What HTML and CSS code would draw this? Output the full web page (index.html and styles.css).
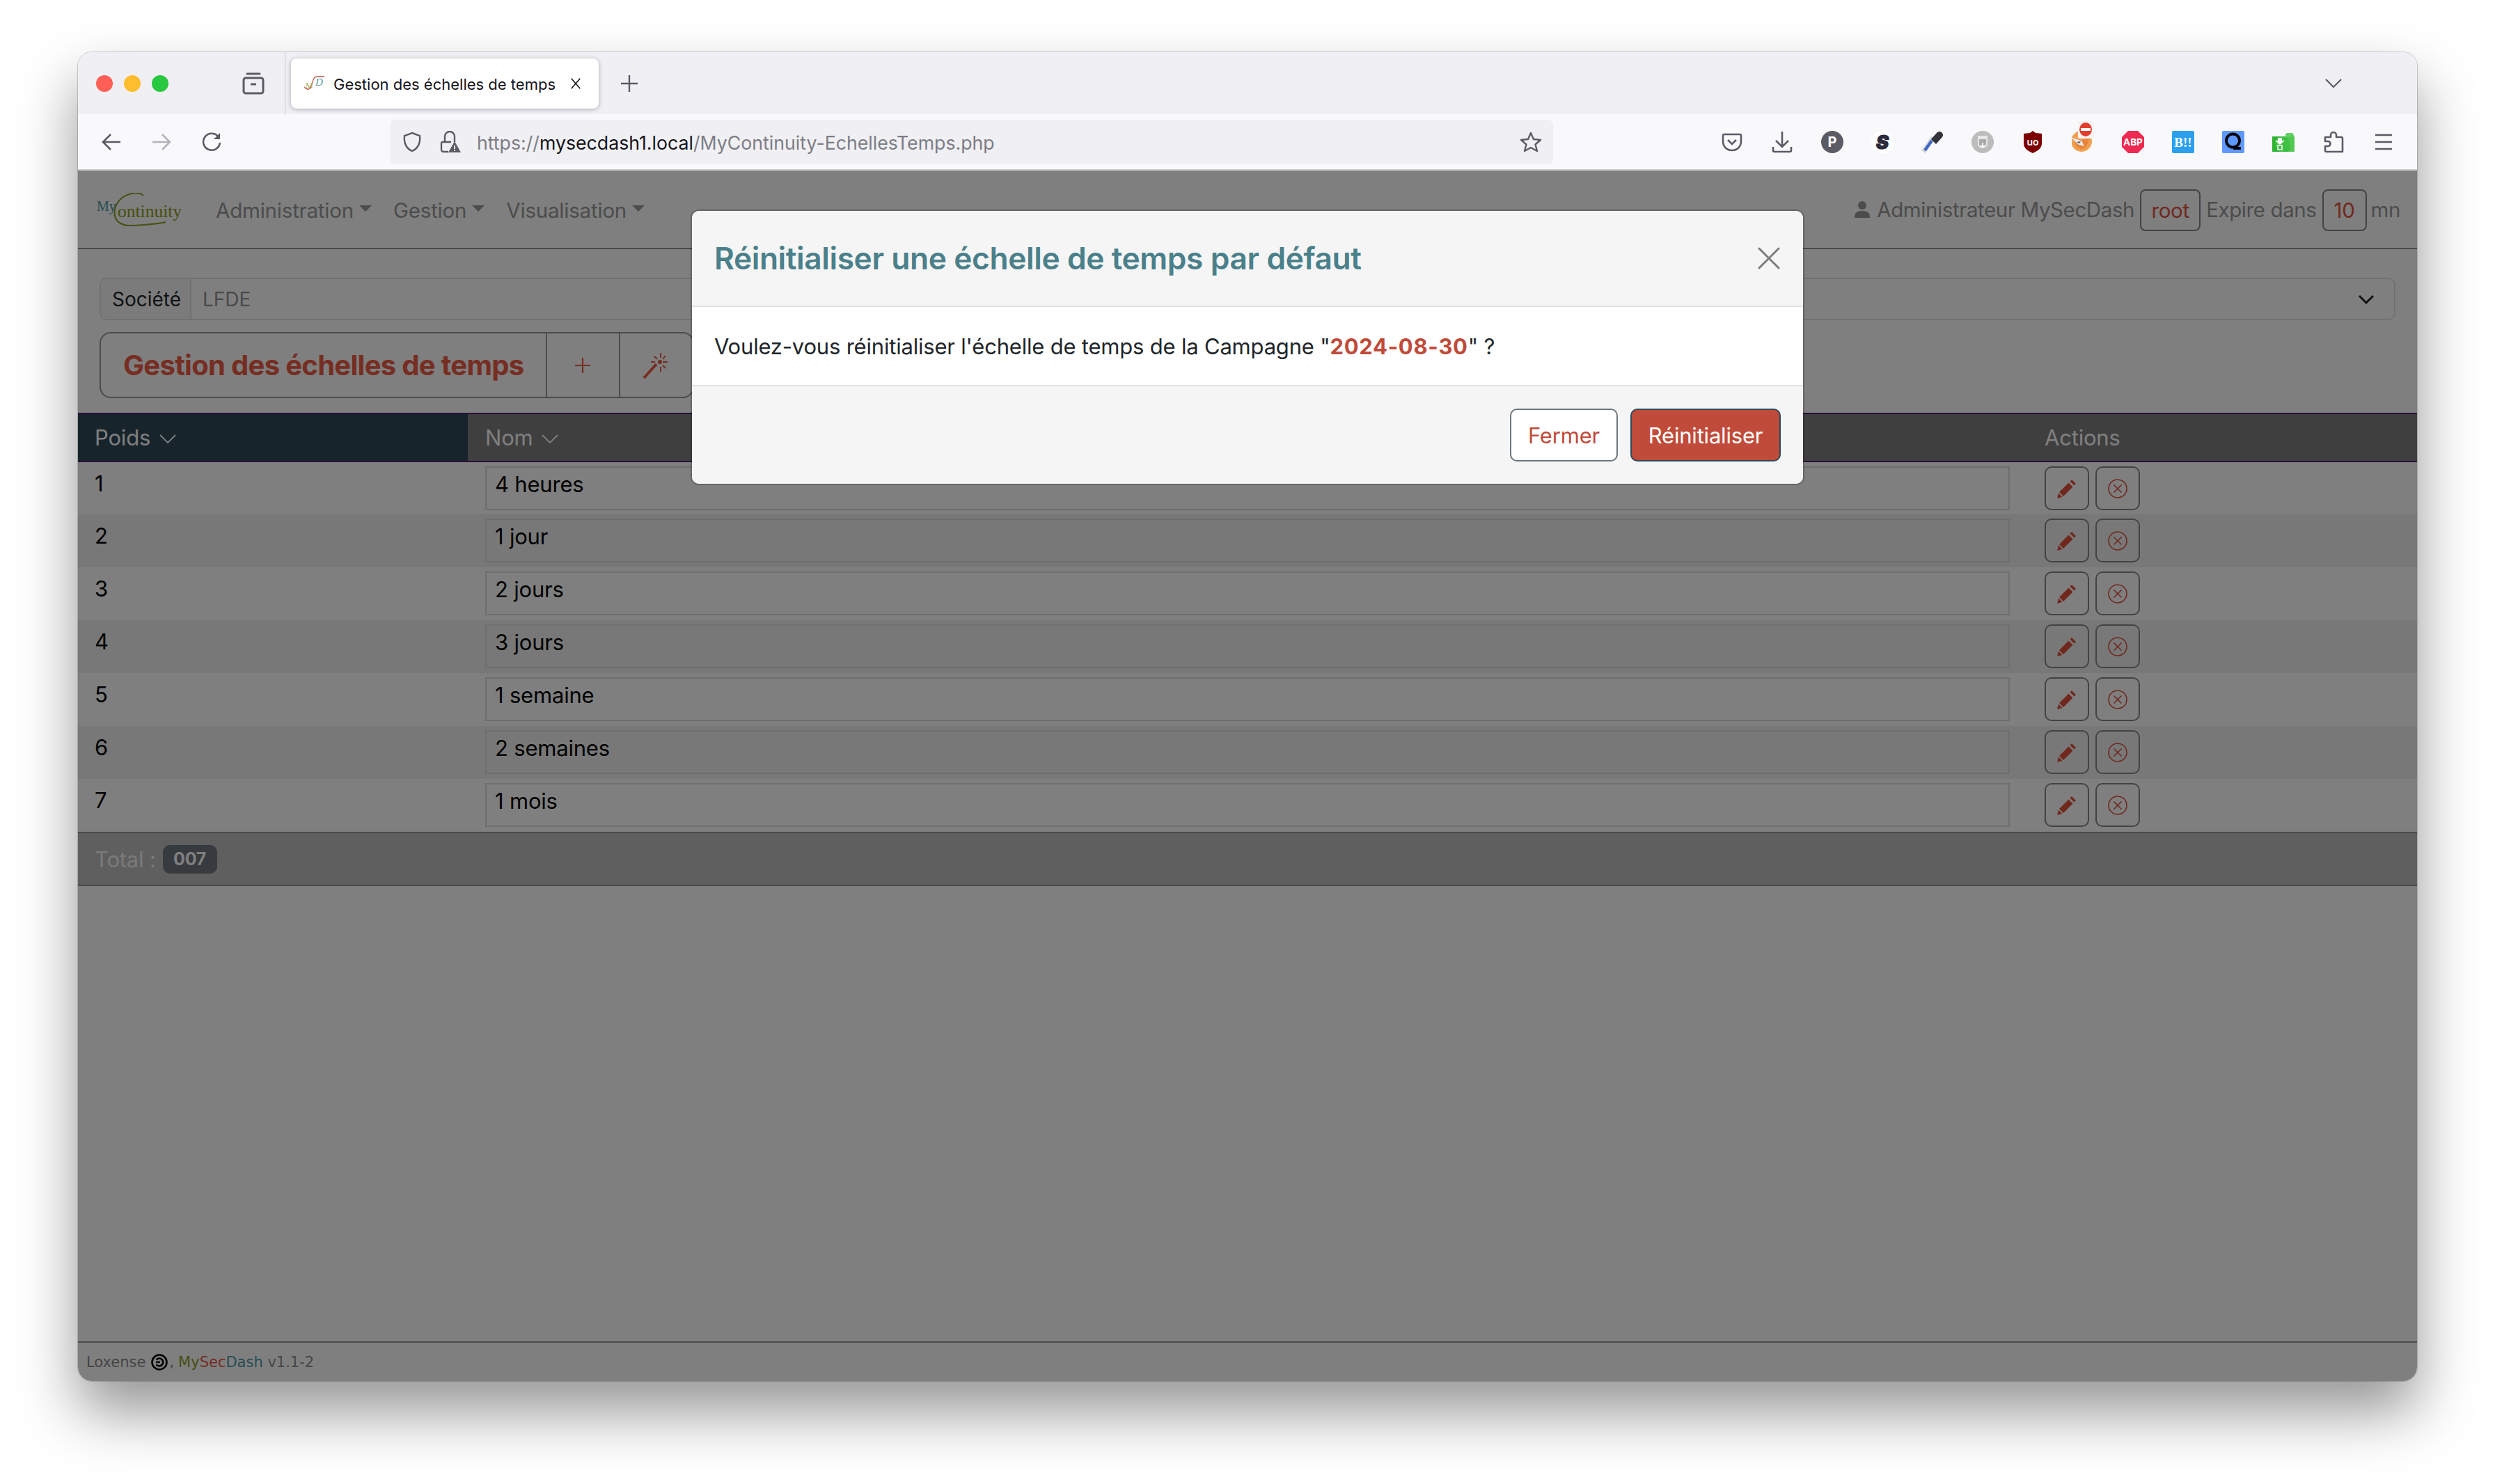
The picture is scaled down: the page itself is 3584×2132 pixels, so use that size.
FILE: index.html
```html
<!DOCTYPE html>
<html lang="fr">
<head>
  <meta charset="UTF-8" />
  <title>Gestion des échelles de temps</title>
  <link rel="stylesheet" href="styles.css">
</head>
<body>
  <div class="window">

    <div class="tabbar">
      <div class="lights">
        <span class="light red"></span>
        <span class="light amber"></span>
        <span class="light green"></span>
      </div>
      <svg class="view-icon" viewBox="0 0 32 32" fill="none" stroke="#5b5b66" stroke-width="3">
        <path d="M7 2h18" stroke-linecap="round"/>
        <rect x="2" y="8" width="28" height="22" rx="3"/>
        <path d="M12 17h8"/>
      </svg>
      <span class="tab-sep"></span>
      <div class="tab">
        <svg class="favicon" viewBox="0 0 32 24" fill="none">
          <path d="M1 17c5 6 9 3 11-4s3-11 8-11h10" stroke="#c0564a" stroke-width="1.3"/>
          <text x="3" y="19" font-size="12" font-family="Liberation Serif" fill="#a9ad5c">M</text>
          <text x="17" y="15" font-size="15" font-style="italic" font-family="Liberation Serif" fill="#5a97a2">D</text>
        </svg>
        <span class="tab-title">Gestion des échelles de temps</span>
        <svg class="tab-close" viewBox="0 0 20 20" stroke="#15141a" stroke-width="1.8"><path d="M3 2l14 16M17 2L3 18"/></svg>
      </div>
      <svg class="new-tab" viewBox="0 0 24 24" stroke="#5b5b66" stroke-width="2.4"><path d="M12 0v24M0 12h24"/></svg>
      <svg class="tabs-menu" viewBox="0 0 24 14" fill="none" stroke="#5b5b66" stroke-width="2.2"><path d="M1 1l11 11L23 1"/></svg>
    </div>

    <div class="toolbar">
      <div class="nav-buttons">
        <span class="tool"><svg class="icon-28" viewBox="0 0 28 28" fill="none" stroke="#5b5b66" stroke-width="2.6"><path d="M27 14H3M13 3L2 14l11 11"/></svg></span>
        <span class="tool"><svg class="icon-28" viewBox="0 0 28 28" fill="none" stroke="#b4b4b9" stroke-width="2.6"><path d="M1 14h24M15 3l11 11-11 11"/></svg></span>
        <span class="tool"><svg class="icon-28" viewBox="0 0 28 28" fill="none" stroke="#5b5b66" stroke-width="2.6"><path d="M24 7A12 12 0 1 0 26 15"/><path d="M26 1v9h-9" fill="#5b5b66" stroke="none"/></svg></span>
      </div>
      <div class="urlbar">
        <svg class="shield" viewBox="0 0 28 30" fill="none" stroke="#5b5b66" stroke-width="2.4"><path d="M14 2l11 4c1 10-2 18-11 22C5 24 2 16 3 6z"/></svg>
        <svg class="lock" viewBox="0 0 30 32" fill="none">
          <path d="M7 16V8a7 7 0 0 1 14 0v8" stroke="#5b5b66" stroke-width="2.4"/>
          <path d="M12 30H5a3 3 0 0 1-3-3V18a2 2 0 0 1 2-2h12" stroke="#5b5b66" stroke-width="2.4"/>
          <path d="M21 15l9 16H12z" fill="#5b5b66"/>
          <path d="M21 21v5M21 27v2" stroke="#f0f0f4" stroke-width="2"/>
        </svg>
        <span class="url"><span class="url-dim">https://</span>mysecdash1.local<span class="url-dim">/MyContinuity-EchellesTemps.php</span></span>
        <svg class="star" viewBox="0 0 32 32" fill="none" stroke="#5b5b66" stroke-width="2.4" stroke-linejoin="round"><path d="M16 3l4 9 10 1-7.500 6.500L25 29l-9-5-9 5 2.500-9.500L2 13l10-1z"/></svg>
      </div>
      <div class="addons">
        <span class="tool"><svg class="icon-32" viewBox="0 0 32 32" fill="none" stroke="#5b5b66" stroke-width="2.600"><path d="M5 5h22a2 2 0 0 1 2 2v8c0 8-6 13-13 13S3 23 3 15V7a2 2 0 0 1 2-2z"/><path d="M10 13l6 6 6-6"/></svg></span>
        <span class="tool"><svg class="icon-32" viewBox="0 0 32 32" fill="none" stroke="#5b5b66" stroke-width="2.600"><path d="M16 1v21M7 14l9 9 9-9M3 23v5a2 2 0 0 0 2 2h22a2 2 0 0 0 2-2v-5"/></svg></span>
        <span class="tool"><svg class="icon-32" viewBox="0 0 32 32"><circle cx="16" cy="16" r="16" fill="#5b5b66"/><text x="16" y="23" text-anchor="middle" font-size="20" font-weight="700" font-family="Inter" fill="#fff">P</text></svg></span>
        <span class="tool"><svg class="icon-32" viewBox="0 0 32 32"><circle cx="16" cy="16" r="16" fill="#fff"/><text x="16" y="26" text-anchor="middle" font-size="27" font-weight="900" font-style="italic" font-family="Inter" fill="#2b2a3a" stroke="#2b2a3a" stroke-width="1.2">S</text></svg></span>
        <span class="tool"><svg class="icon-32" viewBox="0 0 32 32" fill="none"><path d="M3 30L17 10" stroke="#d2d4dc" stroke-width="7"/><path d="M5 28l10-14" stroke="#3e67c4" stroke-width="4"/><path d="M14 12l8-9a5 5 0 0 1 8 6l-9 10z" fill="#33333b"/></svg></span>
        <span class="tool"><svg class="icon-32" viewBox="0 0 32 32"><circle cx="16" cy="16" r="16" fill="#bcbcbc"/><path d="M9 7h14v14l-3 3h-8l-3-3z" fill="#e6e6e6"/><path d="M11 12h10v9h-10z" fill="#a9a9a9"/><path d="M16 17v6M13 21l3 3 3-3" stroke="#fff" stroke-width="1.600" fill="none"/></svg></span>
        <span class="tool"><svg class="icon-32" viewBox="0 0 32 32"><path d="M16 0l4 3 9 1v14c0 7-6 11-13 14C9 29 3 25 3 18V4l9-1z" fill="#7c0000"/><text x="16" y="21" text-anchor="middle" font-size="14" font-weight="600" font-family="Inter" fill="#fff">uo</text></svg></span>
        <span class="tool"><svg class="icon-32 addon-fox" viewBox="0 0 32 46"><circle cx="14" cy="29" r="15" fill="#f0a050"/><path d="M2 24l12 3 12-3-5 13-7 4-7-4z" fill="#e8873c"/><path d="M-2 23l16 5 4 8-8-2z" fill="#e8e8e8"/><path d="M7 30l6-1-2 3z" fill="#555"/><rect x="9" y="0" width="23" height="25" rx="2" fill="#f3f3f3"/><ellipse cx="20" cy="12" rx="9" ry="10" fill="#e23d2e"/><rect x="13" y="10" width="14" height="4" fill="#fff"/></svg></span>
        <span class="tool"><svg class="icon-32" viewBox="0 0 32 32"><path d="M9 0h14l9 9v14l-9 9H9l-9-9V9z" fill="#ee2a52"/><text x="16" y="21" text-anchor="middle" font-size="13.500" font-weight="700" font-family="Inter" fill="#fff">ABP</text></svg></span>
        <span class="tool"><svg class="icon-32" viewBox="0 0 32 32"><rect width="32" height="32" rx="2" fill="#2ca0ee"/><text x="16" y="23" text-anchor="middle" font-size="19" font-weight="700" font-family="Liberation Serif" fill="#fff">B!!</text></svg></span>
        <span class="tool"><svg class="icon-32" viewBox="0 0 32 32"><rect width="32" height="32" rx="2" fill="#5f99ff"/><circle cx="15.500" cy="14" r="9.500" fill="none" stroke="#06080f" stroke-width="4"/><path d="M16 25h11" stroke="#06080f" stroke-width="4"/></svg></span>
        <span class="tool"><svg class="icon-32" viewBox="0 0 32 32"><path d="M19 5l2-2h8l2 3v4H19z" fill="#62d263"/><path d="M0 8h32v22H0z" fill="#2fb533"/><circle cx="15" cy="19" r="11" fill="#3fc043"/><path d="M18 8h14v22H22a14 14 0 0 0-4-22z" fill="#52c754"/><path d="M8 10h6v4h4l-7 6-7-6h4z" fill="#fff"/><rect x="8" y="21" width="6" height="6" fill="none" stroke="#fff" stroke-width="1.500"/></svg></span>
        <span class="tool"><svg class="icon-32" viewBox="0 0 32 32" fill="none" stroke="#5b5b66" stroke-width="2.600" stroke-linejoin="round"><path d="M12 9V6a4 4 0 0 1 8 0v3h7a2 2 0 0 1 2 2v19H6a2 2 0 0 1-2-2v-6h4a3.500 3.500 0 0 0 0-7H4v-6z"/></svg></span>
        <span class="tool"><svg class="icon-32" viewBox="0 0 32 32" stroke="#5b5b66" stroke-width="2.600"><path d="M4 6h24M4 16h24M4 26h24"/></svg></span>
      </div>
    </div>

    <div class="page">
      <nav class="navbar">
        <div class="brand">
          <span class="brand-my">My</span>
          <svg class="brand-swoosh" viewBox="0 0 122 48" fill="none" stroke="#8a9e20" stroke-width="2"><path d="M67 4C60 -2 48 0 38 6C28 13 24 24 26 33C28 44 40 48 52 47C68 46 88 45 99 42"/></svg>
          <span class="brand-name">ontinuity</span>
        </div>
        <a class="menu">Administration</a>
        <a class="menu">Gestion</a>
        <a class="menu">Visualisation</a>
        <div class="session">
          <svg class="user-icon" viewBox="0 0 22 24" fill="#989898"><circle cx="11" cy="6" r="6"/><path d="M0 24c0-8 4-10 11-10s11 2 11 10z"/></svg>
          <span>Administrateur MySecDash</span>
          <span class="chip chip-root">root</span>
          <span>Expire dans</span>
          <span class="chip chip-time">10</span>
          <span class="unit">mn</span>
        </div>
      </nav>

      <div class="company">
        <span class="company-label">Société</span>
        <span class="company-value">LFDE</span>
        <svg class="company-arrow" viewBox="0 0 22 14" fill="none" stroke="#212529" stroke-width="3"><path d="M1 2l10 10L21 2"/></svg>
      </div>

      <div class="title-group">
        <h1 class="title-cell">Gestion des échelles de temps</h1>
        <span class="title-btn plus-btn"><svg viewBox="0 0 22 22" stroke="#ec5a44" stroke-width="2.200"><path d="M11 0v22M0 11h22"/></svg></span>
        <span class="title-btn wand-btn"><svg viewBox="0 0 40 40" fill="none" stroke="#ec5a44" stroke-width="2"><path d="M2 38l18-20" stroke-width="4"/><path d="M26 2v7M26 22v7M36 15h-7M12 15h6M33 6l-4 5M33 24l-4-4M17 7l4 4"/><circle cx="25" cy="15" r="2" fill="#ec5a44"/></svg></span>
      </div>

      <table class="scales">
        <thead>
          <tr>
            <th class="sorted">Poids <svg class="sort-icon" viewBox="0 0 24 14" fill="none" stroke="#fff" stroke-width="1.800"><path d="M1 1l11 11L23 1"/></svg></th>
            <th>Nom <svg class="sort-icon" viewBox="0 0 24 14" fill="none" stroke="#fff" stroke-width="1.800"><path d="M1 1l11 11L23 1"/></svg></th>
            <th>Actions</th>
          </tr>
        </thead>
        <tbody>
          <tr><td>1</td><td><div class="name-box">4 heures</div></td><td><div class="row-actions"><span class="icon-btn"><svg class="pencil" viewBox="0 0 28 28"><use href="#pencil"/></svg></span><span class="icon-btn"><svg class="cancel" viewBox="0 0 28 28"><use href="#cancel"/></svg></span></div></td></tr>
          <tr><td>2</td><td><div class="name-box">1 jour</div></td><td><div class="row-actions"><span class="icon-btn"><svg class="pencil" viewBox="0 0 28 28"><use href="#pencil"/></svg></span><span class="icon-btn"><svg class="cancel" viewBox="0 0 28 28"><use href="#cancel"/></svg></span></div></td></tr>
          <tr><td>3</td><td><div class="name-box">2 jours</div></td><td><div class="row-actions"><span class="icon-btn"><svg class="pencil" viewBox="0 0 28 28"><use href="#pencil"/></svg></span><span class="icon-btn"><svg class="cancel" viewBox="0 0 28 28"><use href="#cancel"/></svg></span></div></td></tr>
          <tr><td>4</td><td><div class="name-box">3 jours</div></td><td><div class="row-actions"><span class="icon-btn"><svg class="pencil" viewBox="0 0 28 28"><use href="#pencil"/></svg></span><span class="icon-btn"><svg class="cancel" viewBox="0 0 28 28"><use href="#cancel"/></svg></span></div></td></tr>
          <tr><td>5</td><td><div class="name-box">1 semaine</div></td><td><div class="row-actions"><span class="icon-btn"><svg class="pencil" viewBox="0 0 28 28"><use href="#pencil"/></svg></span><span class="icon-btn"><svg class="cancel" viewBox="0 0 28 28"><use href="#cancel"/></svg></span></div></td></tr>
          <tr><td>6</td><td><div class="name-box">2 semaines</div></td><td><div class="row-actions"><span class="icon-btn"><svg class="pencil" viewBox="0 0 28 28"><use href="#pencil"/></svg></span><span class="icon-btn"><svg class="cancel" viewBox="0 0 28 28"><use href="#cancel"/></svg></span></div></td></tr>
          <tr><td>7</td><td><div class="name-box">1 mois</div></td><td><div class="row-actions"><span class="icon-btn"><svg class="pencil" viewBox="0 0 28 28"><use href="#pencil"/></svg></span><span class="icon-btn"><svg class="cancel" viewBox="0 0 28 28"><use href="#cancel"/></svg></span></div></td></tr>
        </tbody>
      </table>

      <div class="total">
        <span>Total :</span>
        <span class="badge">007</span>
      </div>

      <footer class="footer">
        <span>Loxense</span>
        <svg class="copyleft" viewBox="0 0 24 24" fill="none" stroke="#000" stroke-width="2.600"><circle cx="12" cy="12" r="10.500"/><path d="M7.500 8.500a5.500 5.500 0 1 1 0 7M7 12h6"/></svg><span class="comma">,</span>
        <span><span class="my">My</span><span class="sec">Sec</span><span class="dash">Dash</span> v1.1-2</span>
      </footer>

      <div class="backdrop">
        <div class="modal">
          <div class="modal-header">
            <h2>Réinitialiser une échelle de temps par défaut</h2>
            <svg class="modal-close" viewBox="0 0 32 32" stroke="#7c7c7c" stroke-width="3" stroke-linecap="round"><path d="M2 2l28 28M30 2L2 30"/></svg>
          </div>
          <div class="modal-body">Voulez-vous réinitialiser l'échelle de temps de la Campagne "<strong>2024-08-30</strong>" ?</div>
          <div class="modal-footer">
            <button class="btn btn-close">Fermer</button>
            <button class="btn btn-reset">Réinitialiser</button>
          </div>
        </div>
      </div>
    </div>
  </div>

  <svg class="defs" width="0" height="0">
    <symbol id="pencil" viewBox="0 0 28 28"><path d="M21 1l6 6-2.500 2.500-6-6zM16.500 5.500l6 6L9 25l-6-6zM2 20.500L7.500 26 0 28z" fill="#e0503d"/></symbol>
    <symbol id="cancel" viewBox="0 0 28 28"><circle cx="14" cy="14" r="13" fill="none" stroke="#e0503d" stroke-width="1.600"/><path d="M8.500 8.500l11 11M19.500 8.500l-11 11" stroke="#e0503d" stroke-width="1.600"/></symbol>
  </svg>
</body>
</html>
```

FILE: styles.css
```css
*, *::before, *::after {
  box-sizing: border-box;
}

html, body {
  height: 100%;
}

body {
  margin: 0;
  padding: 75px 112px 148px;
  background: #fff;
  font-family: 'Inter', sans-serif;
  font-size: 28px;
  color: #212529;
}

svg {
  display: block;
  flex: none;
}

.defs {
  position: absolute;
}

.window {
  height: 100%;
  display: flex;
  flex-direction: column;
  position: relative;
  border-radius: 20px;
  overflow: hidden;
  box-shadow: 0 0 0 1px rgba(0, 0, 0, 0.18), 0 44px 84px rgba(0, 0, 0, 0.42);
}

/* browser chrome */
.tabbar {
  height: 89px;
  display: flex;
  align-items: center;
  background: #f0f0f4;
  padding-left: 26px;
}

.lights {
  display: flex;
  gap: 16px;
}

.light {
  width: 24px;
  height: 24px;
  border-radius: 50%;
}

.red { background: #ff5f57; }
.amber { background: #febc2e; }
.green { background: #28c840; }

.view-icon {
  width: 32px;
  height: 32px;
  margin-left: 106px;
}

.tab-sep {
  width: 1px;
  height: 100%;
  background: #c8c8cc;
  margin-left: 29px;
}

.tab {
  width: 442px;
  height: 72px;
  margin-left: 8px;
  background: #fff;
  border-radius: 8px;
  box-shadow: 0 1px 6px rgba(0, 0, 0, 0.3);
  display: flex;
  align-items: center;
  padding-left: 18px;
  font-size: 22px;
  color: #15141a;
}

.favicon {
  width: 32px;
  height: 24px;
}

.tab-title {
  margin-left: 11px;
  padding-top: 2px;
  white-space: nowrap;
}

.tab-close {
  width: 18px;
  height: 20px;
  margin-left: auto;
  margin-right: 24px;
}

.new-tab {
  width: 24px;
  height: 24px;
  margin-left: 32px;
}

.tabs-menu {
  width: 24px;
  height: 14px;
  margin-left: auto;
  margin-right: 108px;
}

.toolbar {
  height: 81px;
  display: flex;
  align-items: center;
  background: #f9f9fb;
  padding: 0 12px;
  border-bottom: 2px solid #cfcfd2;
}

.nav-buttons {
  display: flex;
}

.tool {
  width: 72px;
  display: flex;
  justify-content: center;
}

.icon-28 {
  width: 28px;
  height: 28px;
}

.icon-32 {
  width: 32px;
  height: 32px;
}

.addon-fox {
  height: 46px;
  margin-top: -14px;
}

.urlbar {
  width: 1671px;
  height: 64px;
  margin-left: 220px;
  background: #f0f0f4;
  border-radius: 8px;
  display: flex;
  align-items: center;
  padding-left: 18px;
  font-size: 26.7px;
  color: #15141a;
}

.shield {
  width: 28px;
  height: 30px;
}

.lock {
  width: 30px;
  height: 32px;
  margin-left: 26px;
}

.url {
  margin-left: 23px;
  padding-top: 2px;
  white-space: nowrap;
}

.url-dim {
  color: #7d7d85;
}

.star {
  width: 32px;
  height: 32px;
  margin-left: auto;
  margin-right: 16px;
}

.addons {
  display: flex;
  margin-left: auto;
}

/* application page */
.page {
  flex: 1;
  min-height: 0;
  position: relative;
  display: flex;
  flex-direction: column;
  background: #fff;
  font-size: 31px;
  letter-spacing: -0.2px;
}

.navbar {
  height: 113px;
  display: flex;
  align-items: center;
  padding: 0 24px 0 27px;
  border-bottom: 2px solid #949494;
  color: #989898;
  font-size: 29.5px;
  flex: none;
}

.brand {
  width: 122px;
  height: 48px;
  position: relative;
  margin-right: 49px;
  font-family: 'Liberation Serif', serif;
  letter-spacing: 0;
}

.brand-my {
  position: absolute;
  left: 0;
  top: 8px;
  font-size: 20px;
  color: #4c9aa4;
}

.brand-swoosh {
  position: absolute;
  left: 0;
  top: 0;
  width: 122px;
  height: 48px;
}

.brand-name {
  position: absolute;
  left: 30px;
  top: 12px;
  font-size: 25.5px;
  color: #8a9e20;
}

.menu {
  display: flex;
  align-items: center;
  margin-top: 3px;
  margin-right: 31px;
}

.menu::after {
  content: "";
  margin-left: 8px;
  margin-top: -6px;
  border-top: 9px solid #989898;
  border-left: 9px solid transparent;
  border-right: 9px solid transparent;
}

.session {
  margin-left: auto;
  display: flex;
  align-items: center;
  gap: 8px;
  letter-spacing: -0.4px;
}

.user-icon {
  width: 22px;
  height: 24px;
  margin-right: 2px;
}

.chip {
  height: 60px;
  border: 2px solid #808890;
  border-radius: 8px;
  color: #e0503d;
  display: flex;
  align-items: center;
  justify-content: center;
  margin-top: 2px;
}

.chip-root {
  width: 87px;
}

.chip-time {
  width: 64px;
}

.unit {
  margin-left: -2px;
}

.company {
  flex: none;
  height: 61px;
  margin: 41px 31px 0;
  display: flex;
  align-items: center;
  border: 2px solid #dee2e6;
  border-radius: 10px;
  font-size: 28px;
  letter-spacing: 0;
}

.company-label {
  height: 100%;
  width: 130px;
  padding-left: 16px;
  display: flex;
  align-items: center;
  border-right: 2px solid #dee2e6;
  background: #f6f6f6;
  border-radius: 10px 0 0 10px;
}

.company-value {
  margin-left: 16px;
  color: #949494;
}

.company-arrow {
  width: 22px;
  height: 14px;
  margin-left: auto;
  margin-right: 29px;
}

.title-group {
  flex: none;
  width: 854px;
  height: 95px;
  margin: 17px 31px 0;
  display: flex;
  border: 2px solid #8e98a0;
  border-radius: 16px;
}

.title-cell {
  width: 640px;
  margin: 0;
  padding-left: 32px;
  display: flex;
  align-items: center;
  font-size: 40px;
  font-weight: 700;
  letter-spacing: -0.7px;
  color: #ec5a44;
  white-space: nowrap;
}

.title-btn {
  width: 106px;
  display: flex;
  align-items: center;
  justify-content: center;
  border-left: 2px solid #8e98a0;
}

.plus-btn svg {
  width: 22px;
  height: 22px;
}

.wand-btn svg {
  width: 40px;
  height: 40px;
}

.scales {
  flex: none;
  width: 100%;
  margin-top: 21px;
  table-layout: fixed;
  border-collapse: collapse;
  border-top: 2px solid #949494;
}

.scales th {
  height: 69px;
  padding: 0 25px;
  background: #7e7e7e;
  color: #fff;
  font-weight: 400;
  text-align: left;
  border-top: 2px solid #541e74;
  border-bottom: 2px solid #541e74;
}

.scales th:nth-child(1) {
  width: 560px;
  padding-left: 24px;
}

.scales th:nth-child(3) {
  width: 560px;
}

.scales th.sorted {
  background: #2e4858;
}

.sort-icon {
  display: inline-block;
  width: 24px;
  height: 14px;
  margin-left: 4px;
  vertical-align: 2px;
}

.scales td {
  height: 76px;
  padding: 6px 25px 0;
  vertical-align: top;
}

.scales td:first-child {
  padding: 12px 24px 0;
  color: #000;
}

.scales tbody tr:nth-child(even) {
  background: #f0f0f0;
}

.name-box {
  height: 63px;
  padding: 5px 12px;
  border: 2px solid #dcdcdc;
  color: #000;
}

.row-actions {
  display: flex;
  gap: 9px;
}

.icon-btn {
  width: 64px;
  height: 63px;
  border: 2px solid #808890;
  border-radius: 10px;
  display: flex;
  align-items: center;
  justify-content: center;
}

.pencil, .cancel {
  width: 28px;
  height: 28px;
}

.total {
  flex: none;
  height: 78px;
  display: flex;
  align-items: center;
  gap: 10px;
  padding: 0 24px;
  background: #bebebe;
  border-top: 2px solid #949494;
  border-bottom: 2px solid #949494;
  color: #f4f4f4;
}

.badge {
  width: 78px;
  height: 41px;
  border-radius: 10px;
  background: #6e747c;
  color: #fff;
  font-size: 25px;
  font-weight: 700;
  display: flex;
  align-items: center;
  justify-content: center;
}

.footer {
  flex: none;
  height: 57px;
  margin-top: auto;
  padding: 0 12px;
  display: flex;
  align-items: center;
  gap: 5px;
  border-top: 2px solid #949494;
  font-family: 'DejaVu Sans', sans-serif;
  font-size: 21px;
  letter-spacing: 0;
  color: #8c8c8c;
}

.copyleft {
  width: 24px;
  height: 24px;
  margin-left: 3px;
}

.comma {
  margin-left: -3px;
  margin-right: 1px;
}

.my { color: #8a9e20; }
.sec { color: #ec5a44; }
.dash { color: #4c9aa4; }

.backdrop {
  position: absolute;
  inset: 0;
  background: rgba(0, 0, 0, 0.5);
  display: flex;
  justify-content: center;
  align-items: flex-start;
  padding-top: 56px;
}

.modal {
  width: 1600px;
  height: 396px;
  display: flex;
  flex-direction: column;
  background: #fff;
  border: 2px solid rgba(0, 0, 0, 0.2);
  background-clip: padding-box;
  border-radius: 12px;
  overflow: hidden;
}

.modal-header {
  height: 138px;
  display: flex;
  align-items: center;
  justify-content: space-between;
  padding: 0 33px 0 32px;
  background: #f5f5f5;
  border-bottom: 2px solid #dee2e6;
}

.modal-header h2 {
  margin: 0;
  font-size: 44.3px;
  font-weight: 600;
  letter-spacing: -0.4px;
  color: #4a808a;
}

.modal-close {
  width: 32px;
  height: 32px;
}

.modal-body {
  height: 114px;
  padding: 0 32px;
  display: flex;
  align-items: center;
  white-space: pre;
  border-bottom: 2px solid #dee2e6;
  color: #212529;
}

.modal-body strong {
  color: #c04b3a;
  letter-spacing: 0.7px;
}

.modal-footer {
  flex: 1;
  display: flex;
  align-items: center;
  justify-content: flex-end;
  gap: 18px;
  padding: 0 32px;
  background: #f5f5f5;
}

.btn {
  height: 76px;
  border-radius: 10px;
  font-family: inherit;
  font-size: 31px;
  letter-spacing: -0.2px;
  padding: 0;
}

.btn-close {
  width: 155px;
  background: #fff;
  border: 2px solid #6c757d;
  color: #c04b3a;
}

.btn-reset {
  width: 216px;
  background: #c04b3a;
  border: 2px solid #2f4a5c;
  color: #fff;
}
```
